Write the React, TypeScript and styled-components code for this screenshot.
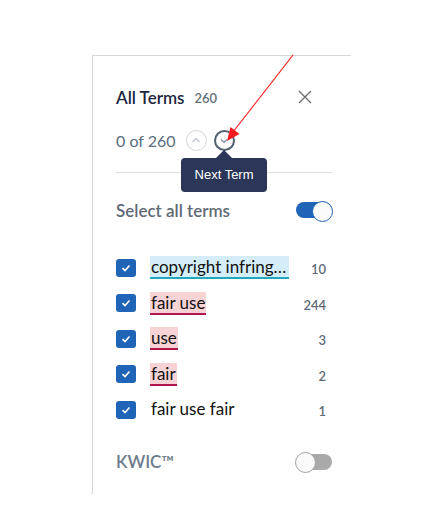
import React, { useState } from 'react'
import styled, { createGlobalStyle, css } from 'styled-components'

const GlobalStyle = createGlobalStyle`
    body {
        margin: 0;
        background: #ffffff;
        font-family: Lato, 'Noto Sans', sans-serif;
    }
    * {
        box-sizing: border-box;
    }
`

type Tone = 'blue' | 'red' | 'none'

const terms: { label: string; count: number; tone: Tone }[] = [
    { label: 'copyright infringement', count: 10, tone: 'blue' },
    { label: 'fair use', count: 244, tone: 'red' },
    { label: 'use', count: 3, tone: 'red' },
    { label: 'fair', count: 2, tone: 'red' },
    { label: 'fair use fair', count: 1, tone: 'none' }
]

const App = () => {
    const [selectAll, setSelectAll] = useState(true)
    const [kwic, setKwic] = useState(false)

    return (
        <Page_>
            <GlobalStyle />
            <Panel_>
                <Header_>
                    <Title_>All Terms</Title_>
                    <TitleCount_>260</TitleCount_>
                    <Close_ aria-label="Close">
                        <svg width="14" height="14" viewBox="0 0 14 14">
                            <path d="M1 1 L13 13 M13 1 L1 13" stroke="#6b6b6b" strokeWidth="1.3" fill="none" />
                        </svg>
                    </Close_>
                </Header_>

                <Nav_>
                    <Position_>0 of 260</Position_>
                    <NavButtons_>
                        <Circle_ aria-label="Previous Term">
                            <svg width="21" height="21" viewBox="0 0 21 21">
                                <polyline points="6.5,12 10,8.5 13.5,12" stroke="#b9c0c6" strokeWidth="1.2" fill="none" />
                            </svg>
                        </Circle_>
                        <TipAnchor_>
                            <Circle_ $active aria-label="Next Term">
                                <svg width="21" height="21" viewBox="0 0 21 21">
                                    <polyline points="7,9.5 10,12.5 13,9.5" stroke="#7b8894" strokeWidth="1.2" fill="none" />
                                </svg>
                            </Circle_>
                            <Tooltip_>Next Term</Tooltip_>
                        </TipAnchor_>
                    </NavButtons_>
                </Nav_>

                <Divider_ />

                <SettingRow_ $first>
                    <SettingLabel_>Select all terms</SettingLabel_>
                    <Toggle_ $on={selectAll} onClick={() => setSelectAll(!selectAll)} aria-label="Select all terms" />
                </SettingRow_>

                <TermList_>
                    {terms.map(t => (
                        <TermRow_ key={t.label}>
                            <Check_>
                                <svg width="10" height="10" viewBox="0 0 10 10">
                                    <polyline points="1.5,5.2 4,7.5 8.5,2.5" stroke="#ffffff" strokeWidth="1.6" fill="none" />
                                </svg>
                            </Check_>
                            <Term_ $tone={t.tone} title={t.label}>
                                {t.label}
                            </Term_>
                            <Count_>{t.count}</Count_>
                        </TermRow_>
                    ))}
                </TermList_>

                <SettingRow_>
                    <SettingLabel_ $muted>KWIC™</SettingLabel_>
                    <Toggle_ $on={kwic} onClick={() => setKwic(!kwic)} aria-label="KWIC" />
                </SettingRow_>
            </Panel_>

            {/* annotation arrow drawn over the screenshot */}
            <Annotation_ width="438" height="507" viewBox="0 0 438 507">
                <line x1="293" y1="55" x2="233" y2="132" stroke="#f41c1c" strokeWidth="1.2" />
                <polygon points="227,141 239.5,134 230.5,127" fill="#f41c1c" />
            </Annotation_>
        </Page_>
    )
}

const Page_ = styled.div`
    position: relative;
    width: 438px;
    height: 507px;
    padding: 55px 0 0 92px;
    overflow: hidden;
`

const Panel_ = styled.div`
    width: 259px;
    height: 439px;
    border-top: 1px solid #d6d6d6;
    border-left: 1px solid #d6d6d6;
    padding: 29px 19px 0 23px;
`

const Header_ = styled.div`
    display: flex;
    align-items: center;
    height: 24px;
`

const Title_ = styled.h3`
    margin: 0;
    font-size: 17px;
    font-weight: 600;
    color: #1c2741;
`

const TitleCount_ = styled.span`
    margin-left: 10px;
    padding-top: 2px;
    font-size: 13px;
    font-weight: 600;
    color: #66707a;
`

const Close_ = styled.button`
    margin-left: auto;
    margin-right: 15px;
    width: 24px;
    height: 24px;
    padding: 0;
    border: none;
    background: none;
    display: grid;
    place-items: center;
`

const Nav_ = styled.div`
    display: flex;
    align-items: center;
    height: 24px;
    margin-top: 19px;
`

const Position_ = styled.span`
    font-size: 16px;
    color: #5a6d7f;
`

const NavButtons_ = styled.div`
    display: flex;
    gap: 7px;
    margin-left: 10px;
`

const TipAnchor_ = styled.div`
    position: relative;
`

const Circle_ = styled.button<{ $active?: boolean }>`
    width: 21px;
    height: 21px;
    padding: 0;
    border-radius: 50%;
    background: #ffffff;
    display: grid;
    place-items: center;
    border: 1.5px solid #cfd4d8;
    svg {
        margin: -1.5px;
    }
    ${({ $active }) =>
        $active &&
        css`
            border: 2px solid #4f6070;
            svg {
                margin: -2px;
            }
        `}
`

const Tooltip_ = styled.div`
    position: absolute;
    top: 28px;
    left: 50%;
    transform: translateX(-50%);
    width: 86px;
    height: 34px;
    border-radius: 4px;
    background: #2b3659;
    color: #ffffff;
    font-family: 'Liberation Sans', Arial, sans-serif;
    font-size: 13px;
    display: grid;
    place-items: center;
    z-index: 10;
    &::before {
        content: '';
        position: absolute;
        top: -8px;
        left: 50%;
        margin-left: -8px;
        border-left: 8px solid transparent;
        border-right: 8px solid transparent;
        border-bottom: 8px solid #2b3659;
    }
`

const Divider_ = styled.div`
    height: 1px;
    margin-top: 20px;
    background: #dedede;
`

const SettingRow_ = styled.div<{ $first?: boolean }>`
    display: flex;
    align-items: center;
    justify-content: space-between;
    height: 24px;
    margin-top: ${({ $first }) => ($first ? '25px' : '22px')};
`

const SettingLabel_ = styled.span<{ $muted?: boolean }>`
    font-size: 17px;
    font-weight: 600;
    color: ${({ $muted }) => ($muted ? '#6c7c8c' : '#5f6a75')};
`

const Toggle_ = styled.button<{ $on: boolean }>`
    position: relative;
    width: 36px;
    height: 16px;
    padding: 0;
    border: none;
    border-radius: 8px;
    background: ${({ $on }) => ($on ? '#1f64b6' : '#a9a9a9')};
    &::after {
        content: '';
        position: absolute;
        top: 50%;
        width: 19px;
        height: 19px;
        margin-top: -9.5px;
        border-radius: 50%;
        background: #fafafa;
        border: 1.5px solid ${({ $on }) => ($on ? '#1f64b6' : '#a0a0a0')};
        ${({ $on }) => ($on ? 'right: -1px;' : 'left: -1px;')}
    }
`

const TermList_ = styled.div`
    margin-top: 28px;
`

const TermRow_ = styled.div`
    display: flex;
    align-items: center;
    height: 35.5px;
`

const Check_ = styled.span`
    flex: none;
    width: 20px;
    height: 18px;
    border-radius: 3px;
    background: #1f64b6;
    display: grid;
    place-items: center;
`

const toneStyles = {
    blue: css`
        background: #d5edf8;
        border-bottom: 2px solid #1fa8be;
    `,
    red: css`
        background: #f8d3d5;
        border-bottom: 2px solid #b3154f;
    `,
    none: css`
        border-bottom: 2px solid transparent;
    `
}

const Term_ = styled.span<{ $tone: Tone }>`
    margin-left: 14px;
    max-width: 139px;
    padding: 0 1px;
    line-height: 21px;
    font-size: 17px;
    color: #111111;
    white-space: nowrap;
    overflow: hidden;
    text-overflow: ellipsis;
    ${({ $tone }) => toneStyles[$tone]}
`

const Count_ = styled.span`
    margin-left: auto;
    margin-right: 6px;
    padding-top: 3px;
    font-size: 13px;
    font-weight: 600;
    color: #5f6a75;
`

const Annotation_ = styled.svg`
    position: absolute;
    top: 0;
    left: 0;
    pointer-events: none;
`

export default App
